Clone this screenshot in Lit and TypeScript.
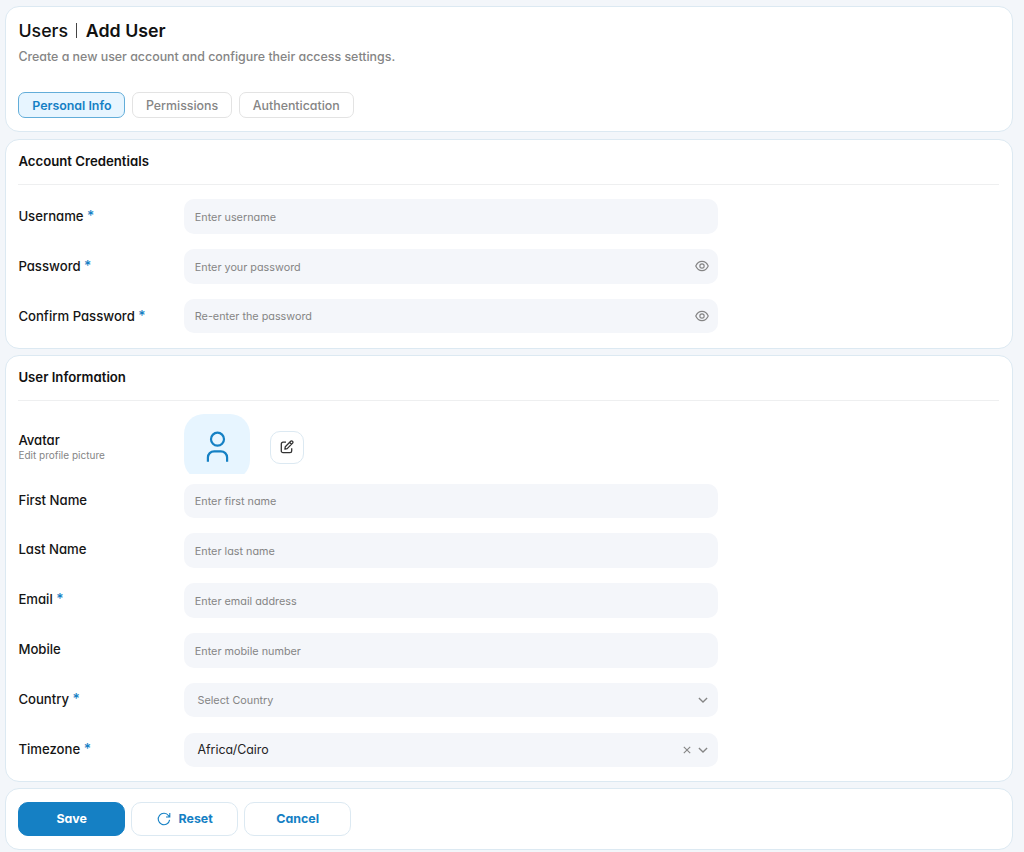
import { LitElement, html, css, nothing } from "lit";
import { customElement, property } from "lit/decorators.js";

const eyeIcon = html`<svg width="14" height="14" viewBox="0 0 24 24" fill="none" stroke="currentColor" stroke-width="2">
  <path d="M1.300 12C3.400 7.200 7.300 4.100 12 4.100S20.600 7.200 22.700 12C20.600 16.800 16.700 19.900 12 19.900S3.400 16.800 1.300 12Z" />
  <circle cx="12" cy="12" r="3.700" />
</svg>`;

const chevronIcon = html`<svg width="10" height="10" viewBox="0 0 10 10" fill="none" stroke="currentColor" stroke-width="1.300">
  <path d="M0.900 3 5 7 9.100 3" />
</svg>`;

const clearIcon = html`<svg width="8" height="8" viewBox="0 0 8 8" fill="none" stroke="currentColor" stroke-width="1.100">
  <path d="M0.800 0.800 7.200 7.200M7.200 0.800 0.800 7.200" />
</svg>`;

const userIcon = html`<svg width="24" height="34" viewBox="0 0 24 34" fill="none" stroke="currentColor" stroke-width="2.200">
  <circle cx="12.500" cy="9.200" r="6.500" />
  <path d="M2.900 31.800V27.500a6.200 6.200 0 0 1 6.200-6.200h6.800a6.200 6.200 0 0 1 6.200 6.200V31.800" />
</svg>`;

const editIcon = html`<svg width="14" height="14" viewBox="0 0 14 14" fill="none" stroke="currentColor" stroke-width="1.300" stroke-linejoin="round">
  <path d="M6 2.200H3A1.700 1.700 0 0 0 1.300 3.900v7A1.700 1.700 0 0 0 3 12.600h7a1.700 1.700 0 0 0 1.700-1.700V8.200" />
  <path d="M4.900 9.100 5.300 6.700 10.700 1.200a1.200 1.200 0 0 1 1.700 0l.2.200a1.200 1.200 0 0 1 0 1.700L7.200 8.600 4.900 9.100ZM9.600 2.400l1.900 1.900" />
</svg>`;

const resetIcon = html`<svg width="14" height="14" viewBox="0 0 14 14" fill="none" stroke="currentColor" stroke-width="1.100">
  <path d="M12.600 7.800A5.700 5.700 0 1 1 11.600 3.700L12.700 4.900M12.800 1v4H9" />
</svg>`;

@customElement("form-row")
class FormRow extends LitElement {
  @property() label = "";
  @property() text = "";
  @property() kind = "input";
  @property({ type: Boolean }) required = false;

  static styles = css`
    :host { display: grid; grid-template-columns: 165.900px 534px; height: 34.600px; color: #151515; }
    .label { font-size: 13.150px; font-weight: 500; line-height: var(--label-line, 34px); white-space: pre; }
    .star { color: #1580c4; font-size: 14px; line-height: 1; }
    .field { display: flex; align-items: center; box-sizing: border-box; padding: 1.600px 9px 0 10.500px; border-radius: 10px; background: #f4f6fa; color: #858585; font-size: 10.820px; white-space: nowrap; }
    .select { padding: 0 10px 0 13.200px; }
    .value { color: #242424; font-size: 12.400px; }
    .grow { flex: 1; }
    .icons { display: flex; align-items: center; gap: 7px; color: #858585; }
    .password .icons { margin-top: -2.600px; }
    svg { display: block; }
  `;

  render() {
    const select = this.kind === "select" || this.kind === "value";
    return html`<div class="label">${this.label}${this.required ? html` <span class="star">*</span>` : nothing}</div>
      <div class="field ${select ? "select" : this.kind}">
        <span class="grow ${this.kind === "value" ? "value" : ""}">${this.text}</span>
        <span class="icons">
          ${this.kind === "password" ? eyeIcon : nothing}
          ${this.kind === "value" ? clearIcon : nothing}
          ${select ? chevronIcon : nothing}
        </span>
      </div>`;
  }
}

@customElement("app-root")
class AppRoot extends LitElement {
  static styles = css`
    :host { display: flex; flex-direction: column; box-sizing: border-box; height: 852px; padding: 6px 11px 0 5px; background: #f3f6fa; color: #111; font-family: Inter, "Noto Sans", sans-serif; font-feature-settings: "cv11" 1; overflow: hidden; }
    .card { box-sizing: border-box; flex: none; padding: 0 13px 0 12.400px; border: 1px solid #dce9f2; border-radius: 14px; background: #fff; }
    .head { height: 126px; margin-bottom: 7px; }
    .credentials { height: 210px; margin-bottom: 6px; }
    .info { height: 427px; margin-bottom: 6px; }
    .footer { display: flex; gap: 6.500px; height: 62px; padding-top: 13px; }
    .title { display: flex; align-items: center; height: 22px; padding-top: 12px; font-size: 17.800px; font-weight: 450; }
    .bar { width: 1px; height: 15px; margin: 0 8.500px 0 8.300px; background: #444; }
    .strong { font-weight: 600; }
    .sub { margin-top: 6.500px; font-size: 12.400px; line-height: 18px; font-weight: 500; color: #858585; }
    .tabs { display: flex; gap: 6.700px; margin-top: 26.500px; }
    .tab { box-sizing: border-box; height: 26px; padding: 0.600px 0 0; border: 1px solid #e3e3e3; border-radius: 7px; color: #858585; font-size: 12.400px; line-height: 24px; font-weight: 500; text-align: center; white-space: nowrap; }
    .t1 { width: 107px; border-color: #62add9; background: #e7f5ff; color: #1580c4; font-weight: 600; }
    .t2 { width: 100px; }
    .t3 { width: 115px; }
    .heading { height: 44px; border-bottom: 1px solid #eeeff0; font-size: 13.200px; line-height: 43px; font-weight: 600; }
    .rows { display: grid; gap: 15.200px; padding-top: 14.200px; }
    .avatar-row { display: flex; height: 60px; margin-top: 13px; }
    .info .rows { padding-top: 9.600px; --label-line: 33px; }
    .avatar-label { width: 165.900px; padding-top: 19px; font-size: 13.150px; line-height: 15px; font-weight: 500; }
    .hint { padding-top: 1px; font-size: 10px; line-height: 13px; font-weight: 400; color: #858585; }
    .avatar-clip { width: 66px; height: 60px; overflow: hidden; }
    .avatar { display: flex; justify-content: center; box-sizing: border-box; width: 66px; height: 66px; padding-top: 16px; border-radius: 20px; background: #e7f5ff; color: #1580c4; }
    .edit { display: flex; align-items: center; justify-content: center; box-sizing: border-box; width: 34px; height: 33px; margin: 17px 0 0 20px; padding-bottom: 1px; border: 1px solid #dce9f2; border-radius: 10px; color: #333; }
    .btn { display: flex; align-items: center; justify-content: center; gap: 8px; box-sizing: border-box; width: 106.500px; height: 34px; padding-bottom: 1px; border: 1px solid #dce9f2; border-radius: 10px; color: #1580c4; font-size: 12.400px; font-weight: 700; }
    .primary { border-color: #1580c4; background: #1580c4; color: #fff; }
    svg { display: block; }
  `;

  render() {
    return html`
      <section class="card head">
        <div class="title"><span>Users</span><span class="bar"></span><span class="strong">Add User</span></div>
        <div class="sub"><span>Create a new user account and configure their access settings.</span></div>
        <nav class="tabs">
          <div class="tab t1">Personal Info</div><div class="tab t2">Permissions</div><div class="tab t3">Authentication</div>
        </nav>
      </section>
      <section class="card credentials">
        <div class="heading">Account Credentials</div>
        <div class="rows">
          <form-row label="Username" text="Enter username" required></form-row>
          <form-row label="Password" text="Enter your password" kind="password" required></form-row>
          <form-row label="Confirm Password" text="Re-enter the password" kind="password" required></form-row>
        </div>
      </section>
      <section class="card info">
        <div class="heading">User Information</div>
        <div class="avatar-row">
          <div class="avatar-label">Avatar<div class="hint">Edit profile picture</div></div>
          <div class="avatar-clip"><div class="avatar">${userIcon}</div></div>
          <div class="edit">${editIcon}</div>
        </div>
        <div class="rows">
          <form-row label="First Name" text="Enter first name"></form-row>
          <form-row label="Last Name" text="Enter last name"></form-row>
          <form-row label="Email" text="Enter email address" required></form-row>
          <form-row label="Mobile" text="Enter mobile number"></form-row>
          <form-row label="Country" text="Select Country" kind="select" required></form-row>
          <form-row label="Timezone" text="Africa/Cairo" kind="value" required></form-row>
        </div>
      </section>
      <section class="card footer">
        <div class="btn primary">Save</div>
        <div class="btn">${resetIcon}Reset</div>
        <div class="btn">Cancel</div>
      </section>
    `;
  }
}
